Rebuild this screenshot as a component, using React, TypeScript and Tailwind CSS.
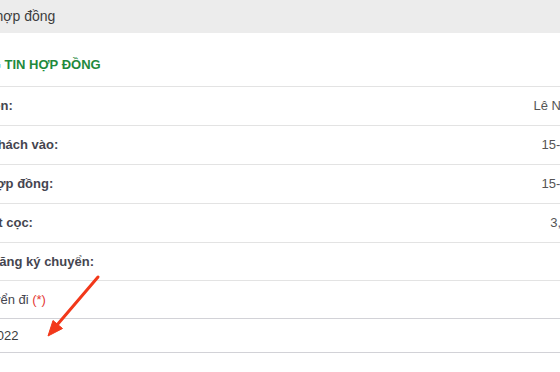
export default function App() {
  const rows = [
    { label: 'Họ và tên:', value: 'Lê Nguyễn A', shift: 'ml-[-50px]' },
    { label: 'Ngày khách vào:', value: '15-07-2022', shift: 'ml-[-45px]' },
    { label: 'Ngày hợp đồng:', value: '15-07-2022', shift: 'ml-[-47px]' },
    { label: 'Tiền đặt cọc:', value: '3,000,000', shift: 'ml-[-47px]' },
    { label: 'Ngày đăng ký chuyển:', value: '', shift: 'ml-[-44px]' }
  ];

  return (
    <div className="relative w-[560px] h-[372px] overflow-hidden bg-white font-['Liberation_Sans',Arial,sans-serif]">
      <div className="h-[33px] bg-[#ececec] flex items-center">
        <span className="ml-[-62px] whitespace-nowrap text-[14px] text-[#3d3d3d]">Thanh lý hợp đồng</span>
      </div>

      <div className="h-[54px] flex items-center pt-[10px] border-b border-[#e3e3e3]">
        <span className="ml-[-46px] whitespace-nowrap text-[13px] font-bold text-[#1f8a3c]">THÔNG TIN HỢP ĐỒNG</span>
      </div>

      {rows.map((row, i) => (
        <div
          key={i}
          className={`${i === 4 ? 'h-[38px]' : 'h-[39px]'} flex items-center justify-between border-b border-[#e3e3e3]`}
        >
          <span className={`${row.shift} whitespace-nowrap text-[13px] font-bold text-[#45454f]`}>{row.label}</span>
          <span className="mr-[-48px] whitespace-nowrap text-[13px] text-[#555]">{row.value}</span>
        </div>
      ))}

      <div className="h-[37px] flex items-center">
        <span className="ml-[-61px] whitespace-nowrap text-[13px] text-[#45454f]">
          Ngày chuyển đi <span className="text-[#e53935]">(*)</span>
        </span>
      </div>

      <div className="h-[35px] flex items-center border-y border-[#d2d2d7]">
        <span className="ml-[-48px] whitespace-nowrap text-[13px] text-[#3d3d3d]">15-07-2022</span>
      </div>

      <svg className="absolute left-0 top-0 pointer-events-none" width="560" height="372" viewBox="0 0 560 372">
        <line x1="98" y1="277" x2="57" y2="325" stroke="#f2381a" strokeWidth="3" strokeLinecap="round" />
        <polygon points="48,336 53,320.5 62.5,328.5" fill="#f2381a" stroke="#f2381a" strokeWidth="1" strokeLinejoin="round" />
      </svg>
    </div>
  );
}
